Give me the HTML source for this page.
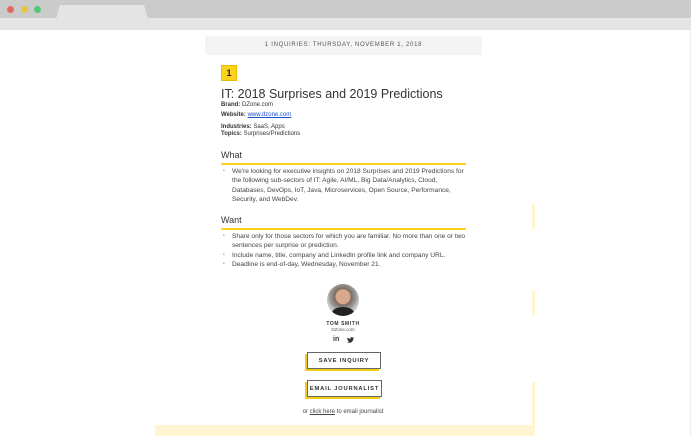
<!DOCTYPE html><html><head><style>
*{margin:0;padding:0;box-sizing:border-box}
body{width:691px;height:436px;background:#fff;font-family:"Liberation Sans",Arial,sans-serif;color:#333;position:relative;overflow:hidden}
.a{position:absolute}
.t{font-size:6px;line-height:8px}
ul{list-style:none}
li{position:relative;padding-left:11px;font-size:6.6px;line-height:9.3px;color:#444}
li:before{content:"•";position:absolute;left:2px;color:#999;font-size:5px}
.btn{position:absolute;height:17px;border:1.5px solid #666;background:#fff;box-shadow:-2px 2px 0 #f4ce14;font-size:5.8px;font-weight:bold;letter-spacing:.8px;display:flex;align-items:center;justify-content:center;color:#333}
</style></head><body>
<div class="a" style="left:0;top:0;width:691px;height:18px;background:#cbcbcb"></div>
<div class="a" style="left:56px;top:5px;width:92px;height:14px;background:#e4e4e4;clip-path:polygon(4px 0,88px 0,92px 100%,0 100%)"></div>
<div class="a" style="left:0;top:18px;width:691px;height:12px;background:#e4e4e4"></div>
<div class="a" style="left:7px;top:6px;width:7px;height:7px;border-radius:50%;background:#e5685d"></div>
<div class="a" style="left:21px;top:6px;width:7px;height:7px;border-radius:50%;background:#e9c53e"></div>
<div class="a" style="left:34px;top:6px;width:7px;height:7px;border-radius:50%;background:#4fcb79"></div>
<div class="a" style="left:690px;top:30px;width:1px;height:406px;background:#eee"></div>
<div class="a" style="left:205px;top:36px;width:277px;height:19px;background:#f3f4f3;font-size:6px;letter-spacing:.7px;text-align:center;line-height:19px;color:#555">1 INQUIRIES: THURSDAY, NOVEMBER 1, 2018</div>
<div class="a" style="left:532px;top:204px;width:3px;height:25px;background:#fff5d0"></div>
<div class="a" style="left:532px;top:290px;width:3px;height:25px;background:#fff5d0"></div>
<div class="a" style="left:532px;top:382px;width:3px;height:54px;background:#fff5d0"></div>
<div class="a" style="left:155px;top:425px;width:380px;height:11px;background:#fff5d0"></div>
<div class="a" style="left:221px;top:65px;width:16px;height:16px;background:#fcd21c;border:1px solid #e8bd00;font-weight:bold;font-size:9px;text-align:center;line-height:14px;color:#222">1</div>
<div class="a" style="left:221px;top:87px;font-size:12.5px;color:#333">IT: 2018 Surprises and 2019 Predictions</div>
<div class="a t" style="left:221px;top:101px"><b>Brand:</b> DZone.com</div>
<div class="a t" style="left:221px;top:111px"><b>Website:</b> <span style="color:#1a4fd0;text-decoration:underline">www.dzone.com</span></div>
<div class="a t" style="left:221px;top:123px"><b>Industries:</b> SaaS, Apps</div>
<div class="a t" style="left:221px;top:130px"><b>Topics:</b> Surprises/Predictions</div>
<div class="a" style="left:221px;top:150px;font-size:9px;color:#333">What</div>
<div class="a" style="left:221px;top:163px;width:245px;height:2px;background:#fcd21c"></div>
<ul class="a" style="left:221px;top:167px;width:248px"><li>We're looking for executive insights on 2018 Surprises and 2019 Predictions for the following sub-sectors of IT: Agile, AI/ML, Big Data/Analytics, Cloud, Databases, DevOps, IoT, Java, Microservices, Open Source, Performance, Security, and WebDev.</li></ul>
<div class="a" style="left:221px;top:215px;font-size:9px;color:#333">Want</div>
<div class="a" style="left:221px;top:228px;width:245px;height:2px;background:#fcd21c"></div>
<ul class="a" style="left:221px;top:232px;width:245px"><li>Share only for those sectors for which you are familiar. No more than one or two sentences per surprise or prediction.</li><li>Include name, title, company and LinkedIn profile link and company URL.</li><li>Deadline is end-of-day, Wednesday, November 21.</li></ul>
<div class="a" style="left:327px;top:284px;width:32px;height:32px;border-radius:50%;background:radial-gradient(circle at 50% 40%,#d9a98e 0 7px,#7d6b60 8px,#999 13px,#c8c8c8 16px);overflow:hidden"><div style="position:absolute;left:5px;top:23px;width:22px;height:12px;border-radius:50% 50% 0 0;background:#222"></div></div>
<div class="a" style="left:293px;top:321px;width:100px;text-align:center;font-size:5px;font-weight:bold;letter-spacing:.6px;color:#333">TOM SMITH</div>
<div class="a" style="left:293px;top:327px;width:100px;text-align:center;font-size:4.5px;color:#555">DZone.com</div>
<div class="a" style="left:333px;top:336px;font-size:7px;font-weight:bold;color:#333">in</div>
<svg class="a" style="left:347px;top:337px" width="7" height="6" viewBox="0 0 24 20"><path fill="#333" d="M24 2.4c-.9.4-1.8.7-2.8.8 1-.6 1.8-1.6 2.2-2.700-1 .6-2 1-3.1 1.2C19.3.7 18 0 16.6 0c-2.7 0-4.9 2.2-4.9 4.9 0 .4 0 .8.1 1.1C7.7 5.8 4.100 3.900 1.700.9c-.4.7-.7 1.600-.7 2.5 0 1.700.9 3.200 2.200 4.100-.8 0-1.600-.2-2.200-.6v.1c0 2.400 1.700 4.400 3.900 4.800-.4.1-.8.2-1.300.2-.3 0-.6 0-.9-.1.6 2 2.400 3.400 4.600 3.400-1.700 1.300-3.800 2.100-6.100 2.100H0c2.200 1.400 4.800 2.200 7.500 2.200 9.100 0 14-7.500 14-14v-.6c1-.7 1.800-1.600 2.500-2.600z"/></svg>
<div class="btn" style="left:307px;top:352px;width:74px">SAVE INQUIRY</div>
<div class="btn" style="left:307px;top:380px;width:75px">EMAIL JOURNALIST</div>
<div class="a" style="left:293px;top:409px;width:100px;text-align:center;font-size:6px;color:#444">or <u>click here</u> to email journalist</div>
</body></html>
